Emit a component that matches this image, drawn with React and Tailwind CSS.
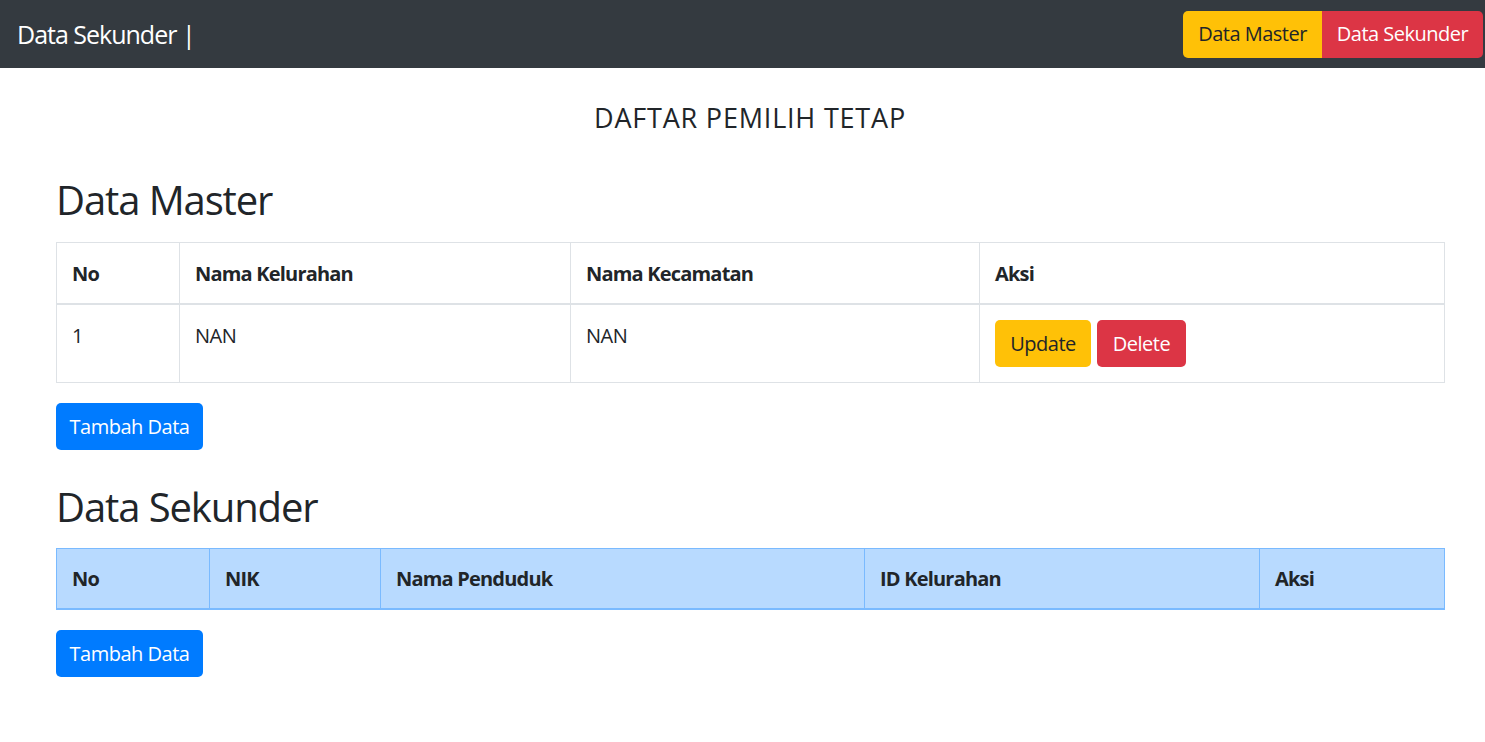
import React from "react";

const font = { fontFamily: '"Open Sans", "Noto Sans", sans-serif' };

const masterCols = [
  { label: "No", w: "w-[123px]" },
  { label: "Nama Kelurahan", w: "w-[391px]" },
  { label: "Nama Kecamatan", w: "w-[409px]" },
  { label: "Aksi", w: "w-[465px]" },
];

const sekunderCols = [
  { label: "No", w: "w-[153px]" },
  { label: "NIK", w: "w-[171px]" },
  { label: "Nama Penduduk", w: "w-[484px]" },
  { label: "ID Kelurahan", w: "w-[395px]" },
  { label: "Aksi", w: "w-[185px]" },
];

function TambahButton() {
  return (
    <button className="mt-[20px] flex h-[47px] w-[147px] items-center justify-center rounded-[5px] bg-[#007bff] text-[20px] tracking-[-0.5px] text-white">
      Tambah Data
    </button>
  );
}

export default function App() {
  return (
    <div className="min-h-screen bg-white text-[#212529]" style={font}>
      {/* ── Navbar ─────────────────────────────────────────── */}
      <nav className="flex h-[68px] items-center justify-between bg-[#343a40] pl-[17px] pr-[2px]">
        <span className="text-[25px] leading-[30px] tracking-[-1px] text-white">Data Sekunder |</span>
        <div className="flex h-[47px] overflow-hidden rounded-[5px] text-[20px] tracking-[-0.5px]">
          <button className="flex w-[139px] items-center justify-center bg-[#ffc107] text-[#212529]">
            Data Master
          </button>
          <button className="flex w-[161px] items-center justify-center bg-[#dc3545] text-white">
            Data Sekunder
          </button>
        </div>
      </nav>

      {/* ── Content ────────────────────────────────────────── */}
      <main className="w-[1388px] ml-[56px] pb-10">
        <h5 className="mt-[35px] text-center text-[27px] leading-[30px] tracking-[0.8px]">DAFTAR PEMILIH TETAP</h5>

        <h2 className="mt-[43px] text-[40px] leading-[48px] tracking-[-1.1px]">Data Master</h2>
        <table className="mt-[18px] w-full table-fixed border-collapse text-[20px] tracking-[-0.5px]">
          <thead>
            <tr>
              {masterCols.map((c) => (
                <th
                  key={c.label}
                  className={`${c.w} border border-b-2 border-[#dee2e6] px-[15px] pt-[16px] pb-[14px] text-left font-bold leading-[30px] tracking-[-0.8px]`}
                >
                  {c.label}
                </th>
              ))}
            </tr>
          </thead>
          <tbody>
            <tr>
              <td className="border border-[#dee2e6] px-[15px] pt-[16px] pb-[14px] align-top leading-[30px]">1</td>
              <td className="border border-[#dee2e6] px-[15px] pt-[16px] pb-[14px] align-top leading-[30px]">NAN</td>
              <td className="border border-[#dee2e6] px-[15px] pt-[16px] pb-[14px] align-top leading-[30px]">NAN</td>
              <td className="border border-[#dee2e6] px-[15px] py-[15px] align-top">
                <div className="flex gap-[6px]">
                  <button className="flex h-[47px] w-[96px] items-center justify-center rounded-[5px] bg-[#ffc107] text-[#212529]">
                    Update
                  </button>
                  <button className="flex h-[47px] w-[89px] items-center justify-center rounded-[5px] bg-[#dc3545] text-white">
                    Delete
                  </button>
                </div>
              </td>
            </tr>
          </tbody>
        </table>
        <TambahButton />

        <h2 className="mt-[33px] text-[40px] leading-[48px] tracking-[-1.1px]">Data Sekunder</h2>
        <table className="mt-[17px] w-full table-fixed border-collapse bg-[#b8daff] text-[20px]">
          <thead>
            <tr>
              {sekunderCols.map((c) => (
                <th
                  key={c.label}
                  className={`${c.w} border border-b-2 border-[#7abaff] px-[15px] pt-[15px] pb-[14px] text-left font-bold leading-[30px] tracking-[-0.8px]`}
                >
                  {c.label}
                </th>
              ))}
            </tr>
          </thead>
        </table>
        <TambahButton />
      </main>
    </div>
  );
}
